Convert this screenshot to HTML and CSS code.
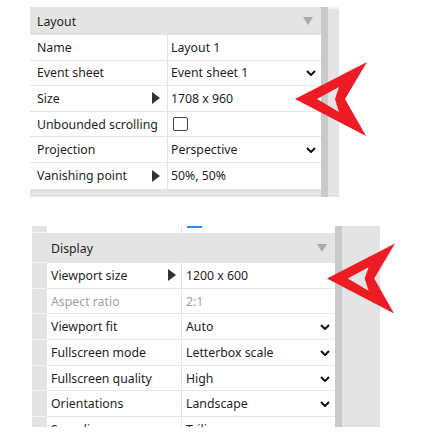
FILE: index.html
```html
<!DOCTYPE html>
<html lang="en">
<head>
    <meta charset="UTF-8">
    <meta name="viewport" content="width=device-width, initial-scale=1.0">
    <title>Properties</title>
    <link rel="stylesheet" href="styles.css">
</head>
<body>
    <div class="page">
        <section class="panel panel-layout">
            <div class="panel-body">
                <div class="group-head">
                    <span>Layout</span>
                    <span class="collapse"></span>
                </div>
                <div class="row">
                    <div class="label">Name</div>
                    <div class="value">Layout 1</div>
                </div>
                <div class="row">
                    <div class="label">Event sheet</div>
                    <div class="value">Event sheet 1 <span class="chev"><svg viewBox="0 0 10 6" width="10" height="6"><polyline points="1,1 5,5 9,1" /></svg></span></div>
                </div>
                <div class="row">
                    <div class="label">Size <span class="expand"></span></div>
                    <div class="value">1708 x 960</div>
                </div>
                <div class="row">
                    <div class="label">Unbounded scrolling</div>
                    <div class="value"><span class="check"></span></div>
                </div>
                <div class="row">
                    <div class="label">Projection</div>
                    <div class="value">Perspective <span class="chev"><svg viewBox="0 0 10 6" width="10" height="6"><polyline points="1,1 5,5 9,1" /></svg></span></div>
                </div>
                <div class="row">
                    <div class="label">Vanishing point <span class="expand"></span></div>
                    <div class="value">50%, 50%</div>
                </div>
            </div>
            <div class="scroll-track"></div>
            <div class="scroll-gutter"></div>
        </section>

        <section class="panel panel-display">
            <div class="panel-body">
                <div class="row row-partial">
                    <div class="strip"></div>
                    <div class="label"></div>
                    <div class="value"><span class="drag-mark"></span></div>
                </div>
                <div class="group-head">
                    <span class="strip"></span>
                    <span class="head-text">Display</span>
                    <span class="collapse"></span>
                </div>
                <div class="row">
                    <div class="strip"></div>
                    <div class="label">Viewport size <span class="expand"></span></div>
                    <div class="value">1200 x 600</div>
                </div>
                <div class="row disabled">
                    <div class="strip"></div>
                    <div class="label">Aspect ratio</div>
                    <div class="value">2:1</div>
                </div>
                <div class="row">
                    <div class="strip"></div>
                    <div class="label">Viewport fit</div>
                    <div class="value">Auto <span class="chev"><svg viewBox="0 0 10 6" width="10" height="6"><polyline points="1,1 5,5 9,1" /></svg></span></div>
                </div>
                <div class="row">
                    <div class="strip"></div>
                    <div class="label">Fullscreen mode</div>
                    <div class="value">Letterbox scale <span class="chev"><svg viewBox="0 0 10 6" width="10" height="6"><polyline points="1,1 5,5 9,1" /></svg></span></div>
                </div>
                <div class="row">
                    <div class="strip"></div>
                    <div class="label">Fullscreen quality</div>
                    <div class="value">High <span class="chev"><svg viewBox="0 0 10 6" width="10" height="6"><polyline points="1,1 5,5 9,1" /></svg></span></div>
                </div>
                <div class="row">
                    <div class="strip"></div>
                    <div class="label">Orientations</div>
                    <div class="value">Landscape <span class="chev"><svg viewBox="0 0 10 6" width="10" height="6"><polyline points="1,1 5,5 9,1" /></svg></span></div>
                </div>
                <div class="row">
                    <div class="strip"></div>
                    <div class="label">Sampling</div>
                    <div class="value">Trilinear <span class="chev"><svg viewBox="0 0 10 6" width="10" height="6"><polyline points="1,1 5,5 9,1" /></svg></span></div>
                </div>
            </div>
            <div class="scroll-track"></div>
            <div class="scroll-gutter"></div>
        </section>

        <!-- red pointer marks drawn over the panels -->
        <svg class="pointer pointer-top" viewBox="0 0 72 74" width="72" height="74">
            <path d="M0 37 L72 0 L50 37 L71 74 Z M22 37 L44 25 L40 37 L44 50 Z" />
        </svg>
        <svg class="pointer pointer-bottom" viewBox="0 0 72 74" width="68" height="73">
            <path d="M0 37 L72 0 L50 37 L71 74 Z M22 37 L44 25 L40 37 L44 50 Z" />
        </svg>
    </div>
</body>
</html>
```

FILE: styles.css
```css
* {
    margin: 0;
    padding: 0;
    box-sizing: border-box;
}

body {
    font-family: 'Noto Sans', 'Open Sans', sans-serif;
    font-size: 12.3px;
    color: #1e1e1e;
    background: #ffffff;
}

.page {
    position: relative;
    width: 437px;
    height: 437px;
    overflow: hidden;
}

.panel {
    display: flex;
    background: #e4e4e4;
}

.panel-body {
    flex: 1;
    display: flex;
    flex-direction: column;
}

.panel-body > * {
    flex: none;
}

.scroll-track {
    width: 7px;
    background: #c9c9c9;
}

.scroll-gutter {
    background: #e4e4e4;
}

/* Layout panel */
.panel-layout {
    margin: 7px 0 0 30px;
    width: 309px;
    height: 190px;
}

.panel-layout .scroll-gutter {
    width: 11px;
    border-top: 2px solid #f2f2f2;
}

.group-head {
    display: flex;
    align-items: center;
    height: 28px;
    padding-left: 7px;
    background: #e4e4e4;
}

.group-head span:first-child,
.head-text {
    flex: 1;
}

.collapse {
    width: 0;
    height: 0;
    margin-right: 8px;
    border-left: 5.5px solid transparent;
    border-right: 5.5px solid transparent;
    border-top: 8px solid #aaaaaa;
}

.row {
    display: grid;
    grid-template-columns: 137px 1fr;
    height: 25.6px;
    background: #ffffff;
    border-bottom: 1px solid #e6e6e6;
}

.row:last-child {
    border-bottom: none;
}

.label {
    display: flex;
    align-items: center;
    justify-content: space-between;
    padding: 0 7px 0 7px;
    white-space: nowrap;
}

.value {
    display: flex;
    align-items: center;
    justify-content: space-between;
    padding: 0 5px 0 3px;
    border-left: 1px solid #e4e4e4;
    white-space: nowrap;
}

.expand {
    width: 0;
    height: 0;
    border-top: 6px solid transparent;
    border-bottom: 6px solid transparent;
    border-left: 8px solid #333333;
}

.chev {
    display: flex;
    margin-top: 1px;
}

.chev polyline {
    fill: none;
    stroke: #111111;
    stroke-width: 2;
}

.check {
    width: 15px;
    height: 14px;
    margin-left: 2px;
    border: 1px solid #444444;
    border-radius: 2px;
}

/* Display panel */
.panel-display {
    margin: 29px 0 0 32px;
    width: 348px;
    height: 201px;
    overflow: hidden;
}

.panel-display .scroll-gutter {
    width: 38px;
}

.panel-display .group-head {
    height: 30px;
    padding-left: 0;
}

.panel-display .head-text {
    padding-left: 4px;
}

.panel-display .group-head .strip {
    flex: none;
    width: 15px;
    align-self: stretch;
}

.panel-display .row {
    grid-template-columns: 15px 134px 1fr;
    height: 25.7px;
    border-bottom: none;
}

.panel-display .row .label,
.panel-display .row .value {
    border-bottom: 1px solid #e6e6e6;
}

.panel-display .label {
    padding: 0 5px 0 4px;
}

.panel-display .value {
    padding-left: 4px;
}

.strip {
    background: #e4e4e4;
    border-bottom: 1px solid #f4f4f4;
}

.panel-display .row-partial {
    height: 7px;
}

.panel-display .row-partial .label,
.panel-display .row-partial .value {
    border-bottom: none;
}

.row-partial .value {
    align-items: flex-start;
}

.drag-mark {
    width: 15px;
    height: 2px;
    margin-left: 1px;
    background: #1a8cff;
}

.disabled .label,
.disabled .value {
    color: #a0a0a0;
}

.pointer {
    position: absolute;
}

.pointer path {
    fill: #ed1c24;
    fill-rule: evenodd;
}

.pointer-top {
    left: 295px;
    top: 62px;
}

.pointer-bottom {
    left: 327px;
    top: 242px;
}
```
